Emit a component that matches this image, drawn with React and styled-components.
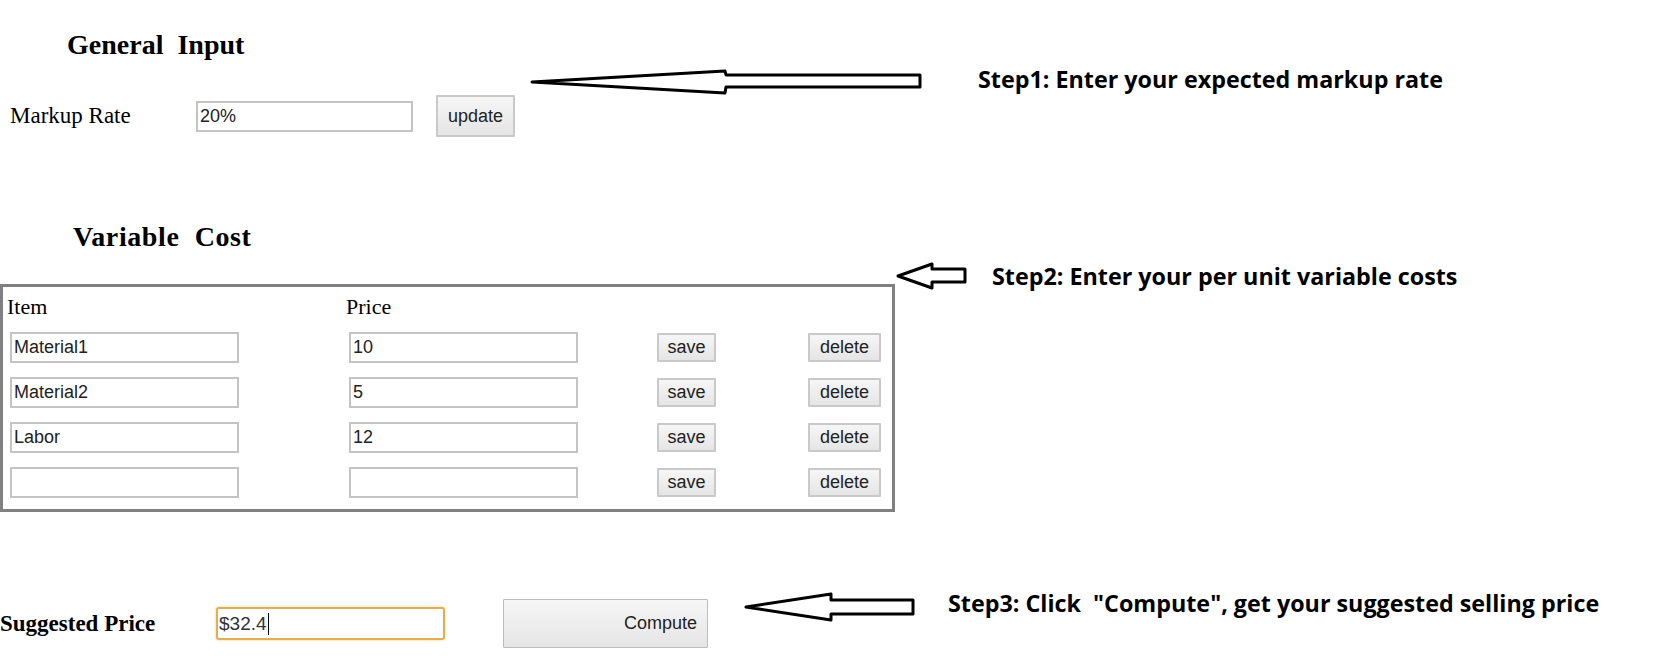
import React from 'react';
import styled, { createGlobalStyle } from 'styled-components';

const GlobalStyle = createGlobalStyle`
  html, body { margin: 0; padding: 0; background: #ffffff; }
  body { font-family: "Liberation Serif", "Times New Roman", serif; color: #000; }
  * { box-sizing: border-box; }
`;

const Page = styled.div`
  width: 1665px;
  height: 670px;
  overflow: hidden;
`;

const Section = styled.section`
  display: flex;
  align-items: flex-start;
  padding-top: ${p => p.$top}px;
`;

const Column = styled.div`
  flex: none;
  display: flex;
  flex-direction: column;
  width: ${p => p.$width}px;
`;

const Heading = styled.h2`
  margin: 0 0 0 ${p => p.$indent}px;
  font: bold 28px/32px "Liberation Serif", "Times New Roman", serif;
  letter-spacing: ${p => p.$spacing || 0}px;
  white-space: pre;
`;

const FormRow = styled.div`
  display: flex;
  align-items: center;
  margin-top: ${p => p.$top}px;
  height: ${p => p.$height}px;
`;

const Label = styled.div`
  flex: none;
  width: ${p => p.$width}px;
  padding-left: ${p => p.$indent || 0}px;
  font-family: "Liberation Serif", "Times New Roman", serif;
  font-size: 23px;
  font-weight: ${p => (p.$bold ? 'bold' : 'normal')};
  white-space: nowrap;
`;

const TextField = styled.input`
  flex: none;
  width: ${p => p.$width}px;
  height: 31px;
  margin: 0 ${p => p.$gap || 0}px 0 0;
  padding: 0 2px;
  border: 2px solid #c4c4c4;
  background: #fff;
  font-family: "Liberation Sans", Arial, sans-serif;
  font-size: 18px;
  color: #222;
  outline: none;
`;

const FocusedField = styled.div`
  flex: none;
  display: flex;
  align-items: center;
  width: 229px;
  height: 33px;
  margin-right: 58px;
  padding: 0 1px;
  border: 2px solid #dfae55;
  border-radius: 3px;
  box-shadow: 0 0 3px #efcf8a;
  font-family: "Liberation Sans", Arial, sans-serif;
  font-size: 19px;
  color: #333;
`;

const Caret = styled.span`
  display: inline-block;
  width: 1px;
  height: 22px;
  margin-left: 1px;
  background: #000;
`;

const Button = styled.button`
  flex: none;
  width: ${p => p.$width}px;
  height: ${p => p.$height}px;
  padding: 0 ${p => (p.$right ? '10px' : '0')} 0 0;
  text-align: ${p => (p.$right ? 'right' : 'center')};
  border: ${p => (p.$thin ? '1px solid #bcbcbc' : '2px solid #c9c9c9')};
  border-radius: 1px;
  background: linear-gradient(#f6f6f6, #e5e5e5);
  font-family: "Liberation Sans", Arial, sans-serif;
  font-size: 18px;
  color: #222;
  cursor: pointer;
`;

const Annotation = styled.div`
  flex: none;
  display: flex;
  align-items: flex-start;
  margin-top: ${p => p.$top || 0}px;
  margin-left: ${p => p.$left || 0}px;
`;

const Note = styled.div`
  flex: none;
  margin-left: ${p => p.$left}px;
  margin-top: ${p => p.$top}px;
  font-family: "Open Sans", "Noto Sans", sans-serif;
  font-weight: 700;
  font-size: 23.3px;
  line-height: 28px;
  white-space: pre;
  color: #000;
`;

const ArrowSvg = styled.svg`
  flex: none;
  display: block;
  overflow: visible;
`;

const CostBox = styled.div`
  width: 895px;
  margin-top: 31px;
  border: 3px solid #808080;
  padding: 8px 0 11px;
  display: flex;
  flex-direction: column;
`;

const GridRow = styled.div`
  display: grid;
  grid-template-columns: 339px 308px 151px 1fr;
  align-items: center;
  height: ${p => p.$height}px;
`;

const HeadCell = styled.div`
  padding-left: 4px;
  font-size: 22px;
  line-height: 24px;
`;

const Cell = styled.div`
  display: flex;
  align-items: center;
  padding-left: 7px;
`;

const RowList = styled.div`
  display: flex;
  flex-direction: column;
  gap: 14px;
  margin-top: 13px;
`;

function Arrow({ width, height, points }) {
  return (
    <ArrowSvg width={width} height={height} viewBox={`0 0 ${width} ${height}`}>
      <polygon
        points={points}
        fill="#fff"
        stroke="#000"
        strokeWidth="3"
        strokeLinejoin="round"
      />
    </ArrowSvg>
  );
}

const rows = [
  { item: 'Material1', price: '10' },
  { item: 'Material2', price: '5' },
  { item: 'Labor', price: '12' },
  { item: '', price: '' },
];

export default function App() {
  return (
    <>
      <GlobalStyle />
      <Page>
        <Section $top={29}>
          <Column $width={528}>
            <Heading $indent={67}>{'General  Input'}</Heading>
            <FormRow $top={34} $height={42}>
              <Label $width={196} $indent={10}>Markup Rate</Label>
              <TextField $width={217} $gap={23} value="20%" readOnly />
              <Button $width={79} $height={42}>update</Button>
            </FormRow>
          </Column>
          <Annotation $top={40}>
            <Arrow
              width={396}
              height={26}
              points="4,13 197,2 198,6 392,6 392,18 198,18 197,24"
            />
            <Note $left={54} $top={-4}>Step1: Enter your expected markup rate</Note>
          </Annotation>
        </Section>

        <Section $top={84}>
          <Column $width={895}>
            <Heading $indent={73} $spacing={0.6}>{'Variable  Cost'}</Heading>
            <CostBox>
              <GridRow $height={24}>
                <HeadCell>Item</HeadCell>
                <HeadCell>Price</HeadCell>
                <div />
                <div />
              </GridRow>
              <RowList>
                {rows.map((r, i) => (
                  <GridRow key={i} $height={31}>
                    <Cell><TextField $width={229} value={r.item} readOnly /></Cell>
                    <Cell><TextField $width={229} value={r.price} readOnly /></Cell>
                    <Cell><Button $width={59} $height={29}>save</Button></Cell>
                    <Cell><Button $width={73} $height={29}>delete</Button></Cell>
                  </GridRow>
                ))}
              </RowList>
            </CostBox>
          </Column>
          <Annotation $top={41}>
            <Arrow
              width={73}
              height={30}
              points="3,14 37,2 37,7 70,7 70,20 37,20 37,26"
            />
            <Note $left={24} $top={0}>Step2: Enter your per unit variable costs</Note>
          </Annotation>
        </Section>

        <Section $top={79}>
          <FormRow $top={8} $height={49}>
            <Label $width={216} $bold>Suggested Price</Label>
            <FocusedField>
              $32.4<Caret />
            </FocusedField>
            <Button $width={205} $height={49} $right $thin>Compute</Button>
          </FormRow>
          <Annotation $left={36}>
            <Arrow
              width={172}
              height={32}
              points="2,16 87,3 87,9 169,9 169,23 87,23 87,29"
            />
            <Note $left={32} $top={-2}>{'Step3: Click  "Compute", get your suggested selling price'}</Note>
          </Annotation>
        </Section>
      </Page>
    </>
  );
}
